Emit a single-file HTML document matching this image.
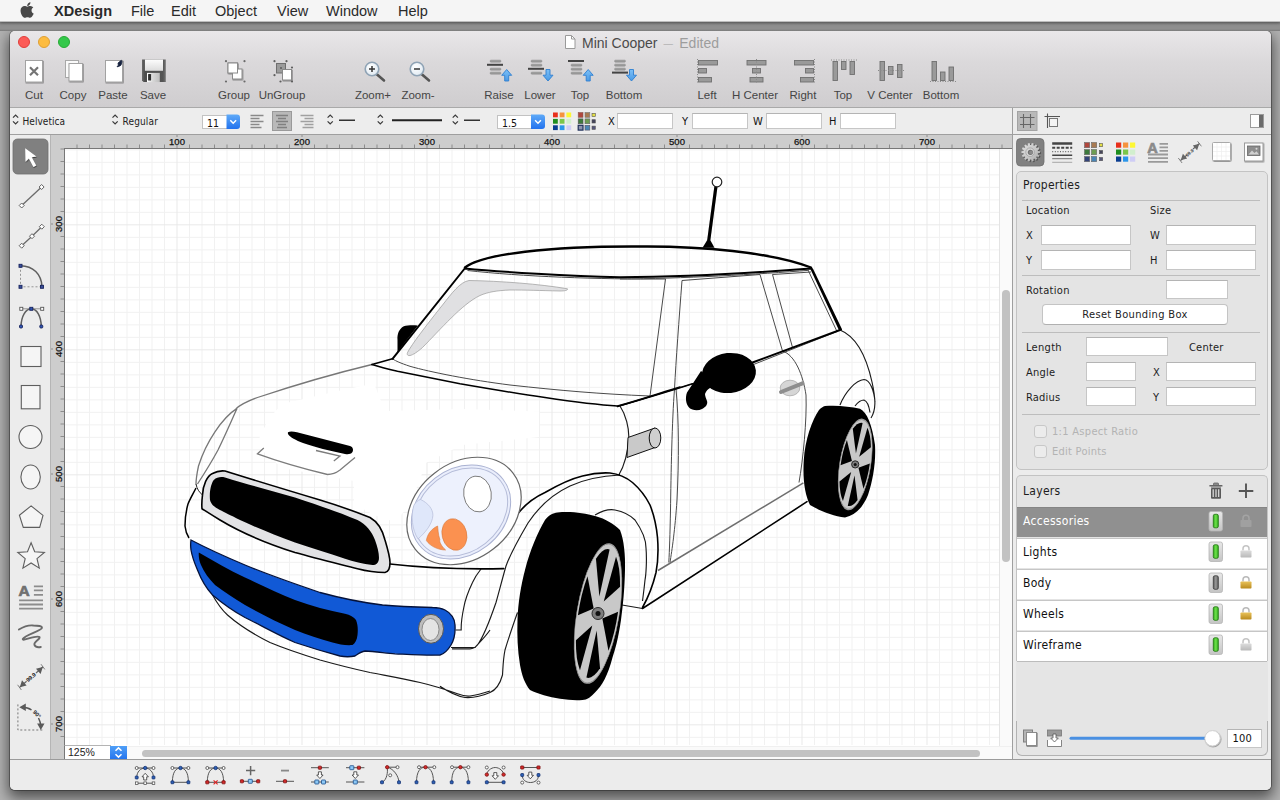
<!DOCTYPE html>
<html><head><meta charset="utf-8"><title>XDesign</title>
<style>
*{box-sizing:border-box;margin:0;padding:0}
html,body{width:1280px;height:800px;overflow:hidden}
body{background:#929292;font-family:"Liberation Sans",sans-serif;position:relative;color:#222}
.abs{position:absolute}
#desk{position:absolute;left:0;top:0;width:1280px;height:800px;background:#b2b2b2}
#topstrip{z-index:2;position:absolute;left:0;top:22px;width:1280px;height:9px;background:linear-gradient(#7e7e7e 0,#8f8f8f 3px,#8f8f8f 7px,#7a7a7a 9px)}
#menubar{z-index:3;position:absolute;left:0;top:0;width:1280px;height:22px;background:#f5f5f5;border-bottom:1px solid #bdbdbd;box-shadow:0 1px 3px rgba(0,0,0,.35)}
#menubar span{position:absolute;top:2px;font-size:14.5px;line-height:18px;color:#2a2a2a;white-space:nowrap}
#win{position:absolute;left:10px;top:31px;width:1261px;height:759px;border-radius:5px;background:#ececec;box-shadow:0 0 0 1px rgba(0,0,0,.3),0 6px 14px 2px rgba(0,0,0,.55);overflow:hidden}
#tbar{position:absolute;left:0;top:0;width:1261px;height:77px;background:linear-gradient(#e9e7e9 0,#dbd9db 40%,#cfcdcf 100%);border-bottom:1px solid #a9a9a9}
.tl{position:absolute;top:5px;width:12px;height:12px;border-radius:6px}
.lbl{position:absolute;top:57px;font-size:11.5px;line-height:14px;color:#454545;text-align:center;width:70px;margin-left:-35px;white-space:nowrap}
#title{position:absolute;top:3.500px;left:572px;font-size:14px;line-height:17px;color:#4a4a4a;white-space:nowrap}
#title i{font-style:normal;color:#9d9d9d}
#fbar{position:absolute;left:0;top:77px;width:1002px;height:27px;background:#ededed;border-bottom:1px solid #9f9f9f}
.lg{font-family:"DejaVu Sans","Liberation Sans",sans-serif;font-stretch:condensed}
.fld{position:absolute;background:#fff;border:1px solid #c6c6c6;border-top-color:#b4b4b4}
#palette{position:absolute;left:0;top:104px;width:41px;height:624px;background:#ececec;border-right:1px solid #b5b5b5}
#hruler{position:absolute;left:41px;top:104px;width:962px;height:15px;background:#cdcdcd}
#vruler{position:absolute;left:41px;top:104px;width:14px;height:624px;background:#cdcdcd}
#canvas{position:absolute;left:54px;top:117px;width:935px;height:598px;background:#fff;border-left:1px solid #777;border-top:1px solid #777;overflow:hidden}
#vscroll{position:absolute;left:989px;top:118px;width:13px;height:597px;background:#fafafa;border-left:1px solid #e4e4e4}
#hscroll{position:absolute;left:54px;top:715px;width:949px;height:13px;background:#fafafa;border-top:1px solid #f0f0f0}
#bbar{position:absolute;left:0;top:728px;width:1261px;height:31px;background:#ececec;border-top:1px solid #9b9b9b}
#side{position:absolute;left:1002px;top:77px;width:259px;height:651px;background:#ececec;border-left:1px solid #9f9f9f}
.box{position:absolute;background:#e4e4e4;border:1px solid #c3c3c3;border-radius:5px}
.sl{position:absolute;font-size:11.5px;line-height:14px;color:#1d1d1d;white-space:nowrap}
.hr{position:absolute;left:5px;width:238px;height:1px;background:#bdbdbd}
.row{position:absolute;left:0;width:250px;height:30px;background:#fff;border-top:1px solid #c9c9c9}
.row span{position:absolute;left:6px;top:7px;font-size:12.5px;line-height:15px;color:#111}
</style></head>
<body>
<div id="desk"></div>
<div id="topstrip"></div>
<div id="menubar">
<svg class="abs" style="left:0;top:0" width="40" height="22" viewBox="0 0 40 22"><path transform="translate(20.400 1.100) scale(0.0350 0.0347)" fill="#484848" d="M318.700 268.700c-.2-36.700 16.400-64.400 50-84.800-18.800-26.900-47.200-41.700-84.700-44.600-35.500-2.800-74.300 20.700-88.500 20.700-15 0-49.400-19.700-76.400-19.700C63.300 141.200 4 184.800 4 273.500q0 39.300 14.400 81.200c12.800 36.700 59 126.700 107.200 125.200 25.200-.6 43-17.900 75.800-17.900 31.800 0 48.300 17.900 76.400 17.900 48.600-.7 90.400-82.500 102.600-119.300-65.200-30.700-61.700-90-61.700-91.900zm-56.600-164.200c27.300-32.400 24.800-61.900 24-72.500-24.100 1.400-52 16.400-67.900 34.900-17.500 19.800-27.800 44.300-25.600 71.900 26.100 2 49.900-11.400 69.500-34.300z"/></svg>
<span style="left:54px;font-weight:bold">XDesign</span>
<span style="left:131px">File</span>
<span style="left:171px">Edit</span>
<span style="left:215px">Object</span>
<span style="left:277px">View</span>
<span style="left:326px">Window</span>
<span style="left:398px">Help</span>
</div>

<div id="win">
<div id="tbar">
 <div class="tl" style="left:8px;background:#fc5b57;border:1px solid #df3e3a"></div>
 <div class="tl" style="left:28px;background:#fdbc40;border:1px solid #de9f34"></div>
 <div class="tl" style="left:48px;background:#34c84a;border:1px solid #27aa35"></div>
 <div id="title">Mini Cooper <i><b style="font-weight:normal;font-size:9.500px;margin:0 2.500px 0 2px;position:relative;top:-1px">—</b> Edited</i></div>
 <svg class="abs" style="left:0;top:0" width="1261" height="77" viewBox="10 31 1261 77">
<defs>
<linearGradient id="gbar" x1="0" y1="0" x2="0" y2="1"><stop offset="0" stop-color="#a9a9a9"/><stop offset="1" stop-color="#8f8f8f"/></linearGradient>
<linearGradient id="garr" x1="0" y1="0" x2="0" y2="1"><stop offset="0" stop-color="#7cc0f7"/><stop offset="1" stop-color="#4a9ae6"/></linearGradient>
<radialGradient id="glens" cx=".4" cy=".35" r=".7"><stop offset="0" stop-color="#ffffff"/><stop offset="1" stop-color="#dfe9f2"/></radialGradient>
<filter id="sh" x="-20%" y="-20%" width="150%" height="150%"><feDropShadow dx="0.6" dy="0.8" stdDeviation="0.6" flood-color="#000" flood-opacity=".45"/></filter>
</defs>
<!-- doc icon in title -->
<path d="M565.500 35.500h6l3.500 3.500v9.500h-9.500z" fill="#fff" stroke="#9a9a9a"/><path d="M571.500 35.500v3.500h3.500" fill="none" stroke="#9a9a9a"/>
<!-- Cut -->
<rect x="25.500" y="60.500" width="17" height="21.500" fill="#fff" stroke="#a2a2a2" filter="url(#sh)"/>
<path d="M30 67.200l8 8M38 67.200l-8 8" stroke="#757575" stroke-width="2.200" fill="none"/>
<!-- Copy -->
<rect x="65.500" y="60.500" width="13" height="17" fill="#fafafa" stroke="#a8a8a8"/>
<rect x="69" y="63.500" width="13.500" height="17.500" fill="#fff" stroke="#a2a2a2" filter="url(#sh)"/>
<!-- Paste -->
<rect x="105.500" y="60.500" width="17" height="21.500" fill="#fff" stroke="#a2a2a2" filter="url(#sh)"/>
<path d="M121.300 60.300l-3.300 2.700 0.300 2.200-1.300 1.600 1.800-0.400 2.200-1.200 1-3.400z" fill="#16223f" stroke="#16223f" stroke-width=".8" stroke-linejoin="round"/>
<!-- Save -->
<linearGradient id="gflop" x1="0" y1="0" x2="1" y2="0"><stop offset="0" stop-color="#6a6a6a"/><stop offset=".12" stop-color="#4c4c4c"/><stop offset=".88" stop-color="#555"/><stop offset="1" stop-color="#747474"/></linearGradient>
<linearGradient id="glab" x1="0" y1="0" x2="0" y2="1"><stop offset="0" stop-color="#fdfdfd"/><stop offset="1" stop-color="#dcdcdc"/></linearGradient>
<linearGradient id="gshut" x1="0" y1="0" x2="1" y2="0"><stop offset="0" stop-color="#fff"/><stop offset=".45" stop-color="#d8d8d8"/><stop offset="1" stop-color="#bdbdbd"/></linearGradient>
<path d="M142 59.500h23.800v22.600h-22.300l-1.500-1.500z" fill="url(#gflop)"/>
<rect x="144.900" y="59.500" width="18.100" height="11.300" fill="url(#glab)"/>
<rect x="147" y="72.900" width="12.800" height="9.200" fill="url(#gshut)"/>
<rect x="148.100" y="74" width="3" height="6.600" rx=".6" fill="#2e2e2e"/>
<!-- Group -->
<g fill="#6a6a6a"><circle cx="226" cy="61.200" r="1.100"/><circle cx="244.500" cy="61.200" r="1.100"/><circle cx="226" cy="81.500" r="1.100"/><circle cx="244.500" cy="81.500" r="1.100"/></g>
<rect x="228" y="63" width="9.500" height="10" fill="#fff" stroke="#8a8a8a" filter="url(#sh)"/>
<rect x="232.500" y="69" width="9.500" height="10" fill="#fff" stroke="#8a8a8a" filter="url(#sh)"/>
<rect x="228" y="63" width="9.500" height="10" fill="#fff" stroke="#8a8a8a"/>
<!-- UnGroup -->
<rect x="276.500" y="63.500" width="9" height="9.500" fill="#9b9b9b" stroke="#6e6e6e"/>
<rect x="282.500" y="69.500" width="9" height="10.500" fill="#fff" stroke="#8a8a8a" filter="url(#sh)"/>
<g fill="#5f5f5f"><circle cx="274.500" cy="61.200" r="1.100"/><circle cx="286.500" cy="61.200" r="1.100"/><circle cx="274.500" cy="75.200" r="1.100"/><circle cx="281" cy="68" r="1.100"/><circle cx="292" cy="67.500" r="1.100"/><circle cx="280.500" cy="81.500" r="1.100"/><circle cx="292" cy="81.500" r="1.100"/></g>
<!-- Zoom+ -->
<g id="mag"><path d="M376.500 74l7.500 6.500" stroke="#555" stroke-width="2.600" stroke-linecap="round"/><circle cx="372" cy="69" r="6.800" fill="url(#glens)" stroke="#8fa3b5" stroke-width="1.600"/></g>
<path d="M369 69h6M372 66v6" stroke="#333" stroke-width="1.500"/>
<!-- Zoom- -->
<use href="#mag" x="45"/>
<path d="M414 69h6" stroke="#333" stroke-width="1.600"/>
<!-- Raise -->
<g id="bars3"><rect x="490" y="60" width="11" height="2.300" rx="1" fill="url(#gbar)" stroke="#8a8a8a" stroke-width=".4"/><rect x="490" y="68" width="11" height="2.300" rx="1" fill="url(#gbar)" stroke="#8a8a8a" stroke-width=".4"/><rect x="490" y="72" width="11" height="2.300" rx="1" fill="url(#gbar)" stroke="#8a8a8a" stroke-width=".4"/></g>
<rect x="487" y="63.800" width="16" height="2" fill="#444"/>
<path id="aup" d="M506.700 69.500l5 5.800h-3v5.700h-4v-5.700h-3z" fill="url(#garr)" stroke="#2f7fd0" stroke-width=".9"/>
<!-- Lower -->
<rect x="531" y="60" width="11" height="2.300" rx="1" fill="url(#gbar)" stroke="#8a8a8a" stroke-width=".4"/><rect x="531" y="64" width="11" height="2.300" rx="1" fill="url(#gbar)" stroke="#8a8a8a" stroke-width=".4"/><rect x="531" y="72" width="11" height="2.300" rx="1" fill="url(#gbar)" stroke="#8a8a8a" stroke-width=".4"/>
<rect x="528" y="67.800" width="16" height="2" fill="#444"/>
<path id="adn" d="M548 81l5-5.800h-3v-5.700h-4v5.700h-3z" fill="url(#garr)" stroke="#2f7fd0" stroke-width=".9"/>
<!-- Top -->
<rect x="571" y="64" width="11" height="2.300" rx="1" fill="url(#gbar)" stroke="#8a8a8a" stroke-width=".4"/><rect x="571" y="68" width="11" height="2.300" rx="1" fill="url(#gbar)" stroke="#8a8a8a" stroke-width=".4"/><rect x="571" y="72" width="11" height="2.300" rx="1" fill="url(#gbar)" stroke="#8a8a8a" stroke-width=".4"/>
<rect x="568" y="60" width="16" height="2" fill="#444"/>
<use href="#aup" x="81.500"/>
<!-- Bottom -->
<rect x="614.500" y="60" width="11" height="2.300" rx="1" fill="url(#gbar)" stroke="#8a8a8a" stroke-width=".4"/><rect x="614.500" y="64" width="11" height="2.300" rx="1" fill="url(#gbar)" stroke="#8a8a8a" stroke-width=".4"/><rect x="614.500" y="68" width="11" height="2.300" rx="1" fill="url(#gbar)" stroke="#8a8a8a" stroke-width=".4"/>
<rect x="612" y="71.600" width="16" height="2" fill="#444"/>
<use href="#adn" x="83.500"/>
<!-- Align icons -->
<g fill="#9a9a9a" stroke="#707070" stroke-width=".9">
<rect x="698.500" y="60.500" width="19" height="4.500"/><rect x="698.500" y="68.500" width="8" height="4.500"/><rect x="698.500" y="77.500" width="13" height="4.500"/>
<rect x="747" y="60.500" width="19" height="4.500"/><rect x="752.500" y="68.500" width="8" height="4.500"/><rect x="750" y="77.500" width="13" height="4.500"/>
<rect x="794.500" y="60.500" width="19" height="4.500"/><rect x="805.500" y="68.500" width="8" height="4.500"/><rect x="800.500" y="77.500" width="13" height="4.500"/>
<rect x="833" y="61.500" width="4.500" height="19"/><rect x="841.500" y="61.500" width="4.500" height="8"/><rect x="850" y="61.500" width="4.500" height="13"/>
<rect x="880" y="61.500" width="4.500" height="19"/><rect x="888.500" y="66.500" width="4.500" height="8"/><rect x="897.500" y="64.500" width="4.500" height="13"/>
<rect x="932" y="61.500" width="4.500" height="19"/><rect x="940.500" y="72" width="4.500" height="8.500"/><rect x="949" y="67" width="4.500" height="13.500"/>
</g>
<g stroke="#8a8a8a" stroke-width="1" stroke-dasharray="1 1.500" fill="none">
<path d="M697.500 59v24"/><path d="M756.500 59v24"/><path d="M814.500 59v24"/>
<path d="M831 60h26"/><path d="M878 70.500h26"/><path d="M930 81.500h26"/>
</g>
</svg>

 <div class="lbl" style="left:24px">Cut</div>
 <div class="lbl" style="left:63px">Copy</div>
 <div class="lbl" style="left:103px">Paste</div>
 <div class="lbl" style="left:143px">Save</div>
 <div class="lbl" style="left:224px">Group</div>
 <div class="lbl" style="left:272px">UnGroup</div>
 <div class="lbl" style="left:363px">Zoom+</div>
 <div class="lbl" style="left:408px">Zoom-</div>
 <div class="lbl" style="left:489px">Raise</div>
 <div class="lbl" style="left:530px">Lower</div>
 <div class="lbl" style="left:570px">Top</div>
 <div class="lbl" style="left:614px">Bottom</div>
 <div class="lbl" style="left:697px">Left</div>
 <div class="lbl" style="left:745px">H Center</div>
 <div class="lbl" style="left:793px">Right</div>
 <div class="lbl" style="left:833px">Top</div>
 <div class="lbl" style="left:880px">V Center</div>
 <div class="lbl" style="left:931px">Bottom</div>
</div>

<div id="fbar">
<svg class="abs" style="left:0;top:0" width="1003" height="27" viewBox="10 108 1003 27">
<defs>
<linearGradient id="gblue" x1="0" y1="0" x2="0" y2="1"><stop offset="0" stop-color="#5faaf8"/><stop offset="1" stop-color="#2272ee"/></linearGradient>
<g id="chev"><path d="M0 3.200l2.600-2.700 2.600 2.700M0 6.800l2.600 2.700 2.600-2.700" fill="none" stroke="#3a3a3a" stroke-width="1.200"/></g>
</defs>
<use href="#chev" x="13" y="114.500"/>
<use href="#chev" x="112.500" y="114.500"/>
<!-- size combo -->
<rect x="202.500" y="115.500" width="25" height="13" fill="#fff" stroke="#c2c2c2"/>
<path d="M226.500 114.500h10.500a3 3 0 0 1 3 3v8.500a3 3 0 0 1-3 3h-10.500z" fill="url(#gblue)"/>
<path d="M230.300 120.300l2.900 2.900 2.900-2.900" fill="none" stroke="#fff" stroke-width="1.500"/>
<!-- align left -->
<path d="M250.500 115.500h13M250.500 118.500h9M250.500 121.500h13M250.500 124.500h9M250.500 127.500h11" stroke="#8a8a8a" stroke-width="1.600"/>
<rect x="272.500" y="111.500" width="19" height="19" fill="#b9b9b9" stroke="#9a9a9a"/>
<path d="M276 115.500h12M278 118.500h8M276 121.500h12M278 124.500h8M277 127.500h10" stroke="#808080" stroke-width="1.600"/>
<path d="M300.500 115.500h13M304.500 118.500h9M300.500 121.500h13M304.500 124.500h9M302.500 127.500h11" stroke="#a0a0a0" stroke-width="1.600"/>
<use href="#chev" x="327.600" y="114.500"/>
<path d="M339 120.300h16" stroke="#333" stroke-width="1.600"/>
<use href="#chev" x="377.700" y="114.500"/>
<path d="M392 120.300h50" stroke="#222" stroke-width="2"/>
<use href="#chev" x="452.700" y="114.500"/>
<path d="M464 120.300h16" stroke="#333" stroke-width="1.600"/>
<!-- width combo -->
<rect x="497.500" y="115.500" width="34" height="13" fill="#fff" stroke="#c2c2c2"/>
<path d="M531 114.500h11a3 3 0 0 1 3 3v8.500a3 3 0 0 1-3 3h-11z" fill="url(#gblue)"/>
<path d="M535.100 120.300l2.900 2.900 2.900-2.900" fill="none" stroke="#fff" stroke-width="1.500"/>
<!-- colour grid 1 -->
<g id="cg1">
<rect x="553" y="112.500" width="4.800" height="4.800" fill="#e8301c"/><rect x="559.700" y="112.500" width="4.800" height="4.800" fill="#f5923e"/><rect x="566.400" y="112.500" width="4.800" height="4.800" fill="#fdf733"/>
<rect x="553" y="118.900" width="4.800" height="4.800" fill="#1f8d1f"/><rect x="559.700" y="118.900" width="4.800" height="4.800" fill="#7bc74a"/><rect x="566.400" y="118.900" width="4.800" height="4.800" fill="#d2efce"/>
<rect x="553" y="125.300" width="4.800" height="4.800" fill="#0a3d91"/><rect x="559.700" y="125.300" width="4.800" height="4.800" fill="#2b96ea"/><rect x="566.400" y="125.300" width="4.800" height="4.800" fill="#cfcdf6"/>
</g>
<g id="cg2">
<rect x="578.200" y="112.500" width="4.800" height="4.800" fill="#b0473d" stroke="#8a5a55" stroke-width=".6"/><rect x="585" y="112.500" width="4.800" height="4.800" fill="#a87a52" stroke="#777" stroke-width=".6"/><rect x="592" y="113.300" width="3.300" height="3.300" fill="#e4df45" stroke="#555" stroke-width=".6"/>
<rect x="578.200" y="118.900" width="4.800" height="4.800" fill="#3d7a3d" stroke="#555" stroke-width=".6"/><rect x="585" y="118.900" width="4.800" height="4.800" fill="#6e9d52" stroke="#666" stroke-width=".6"/><rect x="592" y="119.700" width="3.300" height="3.300" fill="#44445a" stroke="#555" stroke-width=".6"/>
<rect x="578.200" y="125.300" width="4.800" height="4.800" fill="#8c93ad" stroke="#1f2f5a" stroke-width="1.200"/><rect x="585" y="125.300" width="4.800" height="4.800" fill="#4a86b5" stroke="#556" stroke-width=".6"/><rect x="592" y="126.100" width="3.300" height="3.300" fill="#55557a" stroke="#555" stroke-width=".6"/>
</g>
</svg>
<div class="lg abs" style="left:12.500px;top:7px;font-size:10px;line-height:14px;color:#222;letter-spacing:.05px">Helvetica</div>
<div class="lg abs" style="left:112.500px;top:7px;font-size:10px;line-height:14px;color:#222;letter-spacing:.15px">Regular</div>
<div class="lg abs" style="left:197px;top:7.500px;font-size:10.500px;line-height:14px;color:#111">11</div>
<div class="lg abs" style="left:492px;top:7.500px;font-size:10.500px;line-height:14px;color:#111">1.5</div>
<div class="lg abs" style="left:598px;top:7px;font-size:11px;line-height:14px;color:#111">X</div>
<div class="fld" style="left:607px;top:5px;width:56px;height:16px"></div>
<div class="lg abs" style="left:672px;top:7px;font-size:11px;line-height:14px;color:#111">Y</div>
<div class="fld" style="left:682px;top:5px;width:56px;height:16px"></div>
<div class="lg abs" style="left:743px;top:7px;font-size:11px;line-height:14px;color:#111">W</div>
<div class="fld" style="left:756px;top:5px;width:56px;height:16px"></div>
<div class="lg abs" style="left:819px;top:7px;font-size:11px;line-height:14px;color:#111">H</div>
<div class="fld" style="left:830px;top:5px;width:56px;height:16px"></div>

</div>

<div id="palette">
<svg class="abs" style="left:0;top:0" width="41" height="624" viewBox="10 135 41 624">
<defs><filter id="sh2" x="-30%" y="-30%" width="170%" height="170%"><feDropShadow dx="0.500" dy="1" stdDeviation="0.700" flood-color="#000" flood-opacity=".55"/></filter></defs>
<rect x="13" y="139" width="35" height="35" rx="4.500" fill="#808080" stroke="#6e6e6e" stroke-width=".8"/>
<path d="M25.200 148.300l0.300 13.400 3.400-3.100 4.500 8.300 2.800-1.500-4.500-8.200 4.700-0.700z" fill="#fff" filter="url(#sh2)"/>
<!-- line -->
<g stroke="#6b6b6b" stroke-width="1.300" fill="none"><path d="M21.700 205.500L41.600 187"/><path d="M21.700 245.700L32 236.200 41.800 226.700"/></g>
<g fill="#fff" stroke="#555" stroke-width=".9">
<path d="M21.700 203l2.500 2.500-2.500 2.500-2.500-2.500zM41.600 184.500l2.500 2.500-2.500 2.500-2.500-2.500z"/>
<path d="M21.700 243.200l2.500 2.500-2.500 2.500-2.500-2.500zM32 233.700l2.500 2.500-2.500 2.500-2.500-2.500zM41.800 224.200l2.500 2.500-2.500 2.500-2.500-2.500z"/></g>
<!-- arc -->
<path d="M20.500 265.800V286.800H42" stroke="#8a8a8a" stroke-width=".9" stroke-dasharray="2 2" fill="none"/>
<path d="M20.500 265.800C33 266 41.500 274 42 286.800" stroke="#5f5f5f" stroke-width="1.500" fill="none"/>
<g fill="#3a4f9c" stroke="#18245e" stroke-width=".9"><rect x="19" y="264.300" width="3" height="3"/><rect x="19" y="285.300" width="3" height="3"/><rect x="40.500" y="285.300" width="3" height="3"/></g>
<!-- bezier -->
<path d="M21.300 308.800H42.200" stroke="#8a8a8a" stroke-width=".9" fill="none"/>
<path d="M21 326.500C21.300 316 25.500 309 31.300 308.800C37 309 41 316 41.300 326.500" stroke="#5f5f5f" stroke-width="1.500" fill="none"/>
<g fill="#fff" stroke="#555" stroke-width=".9"><rect x="19.800" y="307.300" width="3" height="3"/><rect x="40.700" y="307.300" width="3" height="3"/></g>
<g fill="#2f55b4" stroke="#18245e" stroke-width=".9"><rect x="29.800" y="307.300" width="3" height="3"/><rect x="19.500" y="325" width="3" height="3" rx="1"/><rect x="39.800" y="325" width="3" height="3" rx="1"/></g>
<!-- shapes -->
<g fill="#f5f5f5" stroke="#5e5e5e" stroke-width="1.100">
<rect x="21" y="346.500" width="20" height="20"/>
<rect x="21.300" y="385.500" width="18.700" height="23.300"/>
<circle cx="30.500" cy="437" r="11.500"/>
<ellipse cx="30.600" cy="477" rx="9.700" ry="12"/>
<path d="M31.100 505.900L43 515.400 39.700 527.400H23.300L19.400 515.200z"/>
<path d="M31.1 542.8L34.7 551.8L44.4 552.5L37.0 558.7L39.3 568.1L31.1 563.0L22.9 568.1L25.2 558.7L17.8 552.5L27.5 551.8z"/>
</g>
<!-- text tool -->
<path d="M33.900 586.300h9.100M33.900 590.400h9.100M33.900 594.900h9.100M19.100 600.400h23.900M19.100 604.500h23.900M19.100 608.700h23.900" stroke="#8c8c8c" stroke-width="1.800"/>
<text x="18.600" y="596.300" font-size="15.500" font-weight="bold" fill="#707070" stroke="#707070" stroke-width=".7" font-family="Liberation Sans, sans-serif">A</text>
<!-- scribble -->
<path d="M18.900 629.500C23 627 29 625 33.400 625.500C38 625.500 42.500 626 41.900 628C41 631 25 635 22.800 639C22 642 36 634.500 39.500 637C41 639 33 642 34.500 645C35.500 647 38.500 647.500 40.800 647" stroke="#6a6a6a" stroke-width="1.900" fill="none" stroke-linecap="round"/>
<!-- dimension -->
<g stroke="#666" stroke-width="1.200" fill="none"><path d="M19.600 687.400l7-6.200M36 673l7-6.200"/><path d="M17.600 684.800l3.800 5.200M41 664.200l3.800 5.200" stroke-width=".8"/></g>
<path d="M19.800 687.200l2.200-7 4.600 5.200zM42.800 667l-2.200 7-4.600-5.200z" fill="#5a5a5a"/>
<text transform="translate(32.300 678.800) rotate(-41)" font-size="5.600" font-weight="bold" text-anchor="middle" fill="#222" font-family="Liberation Sans, sans-serif">99.9</text>
<!-- angle -->
<path d="M17.900 704.400V730H43" stroke="#777" stroke-width="1" stroke-dasharray="2 2" fill="none"/>
<path d="M22 707.300C26 707.300 29.500 708.500 31.500 710M38.500 718C40 721 40.800 724 40.800 726" stroke="#555" stroke-width="1.500" fill="none"/>
<path d="M19.300 707.300l6.500-3.800v7.400zM40.800 730l-3.700-6.500h7.400z" fill="#5a5a5a"/>
<text transform="translate(35.500 715.500) rotate(45)" font-size="5.600" font-weight="bold" text-anchor="middle" fill="#222" font-family="Liberation Sans, sans-serif">90°</text>
</svg>

</div>
<div id="hruler"><svg class="abs" style="left:0;top:0" width="962" height="15" viewBox="0 0 962 15"><path d="M26.0 9.5V14M38.5 9.5V14M51.0 9.5V14M63.5 9.5V14M76.0 9.5V14M88.5 9.5V14M101.0 9.5V14M113.5 9.5V14M126.0 0V14M138.5 9.5V14M151.0 9.5V14M163.5 9.5V14M176.0 9.5V14M188.5 9.5V14M201.0 9.5V14M213.5 9.5V14M226.0 9.5V14M238.5 9.5V14M251.0 0V14M263.5 9.5V14M276.0 9.5V14M288.5 9.5V14M301.0 9.5V14M313.5 9.5V14M326.0 9.5V14M338.5 9.5V14M351.0 9.5V14M363.5 9.5V14M376.0 0V14M388.5 9.5V14M401.0 9.5V14M413.5 9.5V14M426.0 9.5V14M438.5 9.5V14M451.0 9.5V14M463.5 9.5V14M476.0 9.5V14M488.5 9.5V14M501.0 0V14M513.5 9.5V14M526.0 9.5V14M538.5 9.5V14M551.0 9.5V14M563.5 9.5V14M576.0 9.5V14M588.5 9.5V14M601.0 9.5V14M613.5 9.5V14M626.0 0V14M638.5 9.5V14M651.0 9.5V14M663.5 9.5V14M676.0 9.5V14M688.5 9.5V14M701.0 9.5V14M713.5 9.5V14M726.0 9.5V14M738.5 9.5V14M751.0 0V14M763.5 9.5V14M776.0 9.5V14M788.5 9.5V14M801.0 9.5V14M813.5 9.5V14M826.0 9.5V14M838.5 9.5V14M851.0 9.5V14M863.5 9.5V14M876.0 0V14M888.5 9.5V14M901.0 9.5V14M913.5 9.5V14M926.0 9.5V14M938.5 9.5V14M951.0 9.5V14" stroke="#8d8d8d" stroke-width="1" fill="none"/><path d="M13 13.500H962" stroke="#777" stroke-width="1" fill="none"/><rect x="117.0" y="2" width="18" height="8" fill="#cdcdcd"/><text x="126.0" y="10" font-size="9.500" text-anchor="middle" fill="#111" stroke="#111" stroke-width=".25" font-family="Liberation Sans, sans-serif">100</text><rect x="242.0" y="2" width="18" height="8" fill="#cdcdcd"/><text x="251.0" y="10" font-size="9.500" text-anchor="middle" fill="#111" stroke="#111" stroke-width=".25" font-family="Liberation Sans, sans-serif">200</text><rect x="367.0" y="2" width="18" height="8" fill="#cdcdcd"/><text x="376.0" y="10" font-size="9.500" text-anchor="middle" fill="#111" stroke="#111" stroke-width=".25" font-family="Liberation Sans, sans-serif">300</text><rect x="492.0" y="2" width="18" height="8" fill="#cdcdcd"/><text x="501.0" y="10" font-size="9.500" text-anchor="middle" fill="#111" stroke="#111" stroke-width=".25" font-family="Liberation Sans, sans-serif">400</text><rect x="617.0" y="2" width="18" height="8" fill="#cdcdcd"/><text x="626.0" y="10" font-size="9.500" text-anchor="middle" fill="#111" stroke="#111" stroke-width=".25" font-family="Liberation Sans, sans-serif">500</text><rect x="742.0" y="2" width="18" height="8" fill="#cdcdcd"/><text x="751.0" y="10" font-size="9.500" text-anchor="middle" fill="#111" stroke="#111" stroke-width=".25" font-family="Liberation Sans, sans-serif">600</text><rect x="867.0" y="2" width="18" height="8" fill="#cdcdcd"/><text x="876.0" y="10" font-size="9.500" text-anchor="middle" fill="#111" stroke="#111" stroke-width=".25" font-family="Liberation Sans, sans-serif">700</text></svg></div>
<div id="vruler"><svg class="abs" style="left:0;top:0" width="14" height="624" viewBox="0 0 14 624"><path d="M9.5 14.0H14M9.5 26.5H14M9.5 39.0H14M9.5 51.5H14M9.5 64.0H14M9.5 76.5H14M0 89.0H14M9.5 101.5H14M9.5 114.0H14M9.5 126.5H14M9.5 139.0H14M9.5 151.5H14M9.5 164.0H14M9.5 176.5H14M9.5 189.0H14M9.5 201.5H14M0 214.0H14M9.5 226.5H14M9.5 239.0H14M9.5 251.5H14M9.5 264.0H14M9.5 276.5H14M9.5 289.0H14M9.5 301.5H14M9.5 314.0H14M9.5 326.5H14M0 339.0H14M9.5 351.5H14M9.5 364.0H14M9.5 376.5H14M9.5 389.0H14M9.5 401.5H14M9.5 414.0H14M9.5 426.5H14M9.5 439.0H14M9.5 451.5H14M0 464.0H14M9.5 476.5H14M9.5 489.0H14M9.5 501.5H14M9.5 514.0H14M9.5 526.5H14M9.5 539.0H14M9.5 551.5H14M9.5 564.0H14M9.5 576.5H14M0 589.0H14M9.5 601.5H14" stroke="#8d8d8d" stroke-width="1" fill="none"/><rect x="2" y="80.0" width="8" height="18" fill="#cdcdcd"/><text transform="translate(10.5 89.0) rotate(-90)" font-size="9.500" text-anchor="middle" fill="#111" stroke="#111" stroke-width=".25" font-family="Liberation Sans, sans-serif">300</text><rect x="2" y="205.0" width="8" height="18" fill="#cdcdcd"/><text transform="translate(10.5 214.0) rotate(-90)" font-size="9.500" text-anchor="middle" fill="#111" stroke="#111" stroke-width=".25" font-family="Liberation Sans, sans-serif">400</text><rect x="2" y="330.0" width="8" height="18" fill="#cdcdcd"/><text transform="translate(10.5 339.0) rotate(-90)" font-size="9.500" text-anchor="middle" fill="#111" stroke="#111" stroke-width=".25" font-family="Liberation Sans, sans-serif">500</text><rect x="2" y="455.0" width="8" height="18" fill="#cdcdcd"/><text transform="translate(10.5 464.0) rotate(-90)" font-size="9.500" text-anchor="middle" fill="#111" stroke="#111" stroke-width=".25" font-family="Liberation Sans, sans-serif">600</text><rect x="2" y="580.0" width="8" height="18" fill="#cdcdcd"/><text transform="translate(10.5 589.0) rotate(-90)" font-size="9.500" text-anchor="middle" fill="#111" stroke="#111" stroke-width=".25" font-family="Liberation Sans, sans-serif">700</text></svg></div>
<div id="canvas">
<svg class="abs" style="left:0;top:0" width="935" height="596" viewBox="0 0 935 596"><path d="M12.00 0V596M24.50 0V596M37.00 0V596M49.50 0V596M62.00 0V596M74.50 0V596M87.00 0V596M99.50 0V596M124.50 0V596M137.00 0V596M149.50 0V596M162.00 0V596M174.50 0V596M187.00 0V596M199.50 0V596M212.00 0V596M224.50 0V596M249.50 0V596M262.00 0V596M274.50 0V596M287.00 0V596M299.50 0V596M312.00 0V596M324.50 0V596M337.00 0V596M349.50 0V596M374.50 0V596M387.00 0V596M399.50 0V596M412.00 0V596M424.50 0V596M437.00 0V596M449.50 0V596M462.00 0V596M474.50 0V596M499.50 0V596M512.00 0V596M524.50 0V596M537.00 0V596M549.50 0V596M562.00 0V596M574.50 0V596M587.00 0V596M599.50 0V596M624.50 0V596M637.00 0V596M649.50 0V596M662.00 0V596M674.50 0V596M687.00 0V596M699.50 0V596M712.00 0V596M724.50 0V596M749.50 0V596M762.00 0V596M774.50 0V596M787.00 0V596M799.50 0V596M812.00 0V596M824.50 0V596M837.00 0V596M849.50 0V596M874.50 0V596M887.00 0V596M899.50 0V596M912.00 0V596M924.50 0V596M0 0.85H935M0 13.35H935M0 25.85H935M0 38.35H935M0 50.85H935M0 63.35H935M0 88.35H935M0 100.85H935M0 113.35H935M0 125.85H935M0 138.35H935M0 150.85H935M0 163.35H935M0 175.85H935M0 188.35H935M0 213.35H935M0 225.85H935M0 238.35H935M0 250.85H935M0 263.35H935M0 275.85H935M0 288.35H935M0 300.85H935M0 313.35H935M0 338.35H935M0 350.85H935M0 363.35H935M0 375.85H935M0 388.35H935M0 400.85H935M0 413.35H935M0 425.85H935M0 438.35H935M0 463.35H935M0 475.85H935M0 488.35H935M0 500.85H935M0 513.35H935M0 525.85H935M0 538.35H935M0 550.85H935M0 563.35H935M0 588.35H935" stroke="#f1f1f1" stroke-width="1" fill="none"/><path d="M112.00 0V596M237.00 0V596M362.00 0V596M487.00 0V596M612.00 0V596M737.00 0V596M862.00 0V596M0 75.85H935M0 200.85H935M0 325.85H935M0 450.85H935M0 575.85H935" stroke="#e9e9e9" stroke-width="1" fill="none"/></svg><svg class="abs" style="left:0;top:0" width="935" height="596" viewBox="65 149 935 596">
<path d="M282 404L338 391 374 383.500 385 411 462 409 539 411.500 539 437 462 445 426 463 410.500 504 395 522 374 515 354 504 354 481 282 468 256 445 268.500 419z" fill="#fff"/>
<path d="M372 364.500C345 371 295 385 257.500 397.500C248 401 240 405 236 408.800M237 408.400C222 418 206 442 198.500 466C197 473 196 479 196 484.500M237 408.400C231 422 224 438 218 450C211 463 204 474 197.500 484" fill="none" stroke="#777" stroke-width="1.300"/>
<path d="M665.500 279L650 396C600 394 560 390.500 510 385C470 380 430 372 410 366.300C400 363 396 361 393 359.200M467.500 270.500C520 276.500 600 279.500 665.500 279M674.500 389C676 360 679 320 682 280.500L760 274.500L782.500 351M792.500 347.500L772.500 274.500L811 272M620 279C680 278.700 760 274.200 809 270.300M674.500 389C672 420 671 475 670.500 510C670 535 669.500 550 668.800 562.500M676 389C679 420 679 460 677 500C675 530 672 550 670 562.500M782.500 351C795 355 803 375 806 395C807 420 803 460 799 482.500M752.500 362.500L692.500 383.800L620 406M808.500 271L837 331.500L753.500 364.500" fill="none" stroke="#4a4a4a" stroke-width="1"/>
<path d="M658 570.500L803.400 482.800" fill="none" stroke="#6e6e6e" stroke-width="1.500"/>
<path d="M840 330C855 336 866 355 872 382C876 400 876 410 871 418M840 405C845 392 856 380 864 379.500C870 380 874 390 875 402M855 406C858 402 861 400 864 400C867 401 869 406 870 412.500M620 406C626 415 629 428 628.800 437.500C628 450 626 463 618.800 475M620 475C600 476 585 479 570 486C555 493 540 505 528 523C518 540 510 555 506 566C502 580 499 592 496 602.500C490 620 484 636 477.500 645C475 648 472 648.800 470 648.800L452 648.800M595 515C602 511 610 509 615 510C625 512 631 516 635 520C642 530 646 540 646 548C647 560 646 575 645 580C644 590 643 597 642.500 601M481 569C477 574 474.500 578 472.500 582.500C468 592 465 600 463.800 607.500C462 616 461 624 461.200 630L455.500 630M517.500 612.500C512 628 508 640 505 650C503 660 503 668 502.500 675C500 684 496 690 490 692.500C482 696 472 698 465 697.500C455 696 447 691 440 686.300M212.500 595C217 603 222 610 227.500 615C240 626 255 635 270 642.500C288 650 304 655 320 660C338 665 354 669 370 672.500C388 676 405 679 420 682.500C435 686 447 690 457.500 693.800C462 695.500 466 696.500 470 696C478 695 484 693 490 691M451 647.500L475 647.500C480 642 486 636 490 630M622 605L642.500 608.500" fill="none" stroke="#1a1a1a" stroke-width="1.150"/>
<path d="M465 267.500C482 254 550 246 640 246.500C700 246 770 252 811 267.500" fill="none" stroke="#000" stroke-width="2.400" stroke-linecap="round"/>
<path d="M465 268.500C500 272 570 276 620 277.300C680 277 760 272.500 811 268.500M465.500 267.500L392.500 358.800M811 268L840 330M812 269L841 329.500M840 330L752.500 362.500" fill="none" stroke="#000" stroke-width="2" stroke-linecap="round"/>
<path d="M372 364.500C380 367 390 369.500 397.500 371.300C420 376 440 380 460 383.800C490 389 520 394 545 397.500C575 402 600 405 617.500 406C640 400 660 393 680 387" fill="none" stroke="#000" stroke-width="1.500" stroke-linecap="round"/>
<path d="M372 364.500L392.500 358.800M617.500 406.500C640 400 670 391 692.500 383.800M642.500 608.500L807 501.700M515 517.500C523 506 533 498 545 492.500C558 485 570 479 582.500 476C592 473.500 601 472.500 610 473C619 474 627 478 632.500 482.500C640 489 646 497 650 505C654 515 656.500 527 657.500 537.500C658.500 550 658 562 656 572.500C653 585 649 596 642.500 607.500M390 564C420 567.500 460 569.500 503.800 568.600" fill="none" stroke="#000" stroke-width="1.600" stroke-linecap="round"/>
<path d="M469 280.500C500 281 540 284 567.500 288.800C568 290 566 291 560 291C540 290.500 525 290 510 290C497 290.500 488 292 480 295.500C462 304 440 330 422.500 347.500C418 351.500 413 355 410 355.500C407 356 407 354 407.500 352.500C412 344 425 327 442.500 305C452 293 460 282 469 280.500z" fill="#e0e0e2" stroke="#999" stroke-width=".7"/>
<path d="M417.500 325.600C412 325 407 325.500 403.800 326.300C399 329 397 334 397.500 340C397.500 345 397.500 349 397.500 352L417.500 326z" fill="#000"/>
<path d="M716 186L708.800 240" stroke="#000" stroke-width="3.200" fill="none"/><path d="M702.500 247.800L708.800 237.500L714.500 247.800z" fill="#000"/><circle cx="717" cy="182" r="4.800" fill="#fff" stroke="#222" stroke-width="1.200"/>
<ellipse cx="729" cy="373" rx="27" ry="20" transform="rotate(-6 729 373)" fill="#000"/>
<path d="M701 371L687 392.500C685 398 686 404 689 407.500C692 410.500 698 411 702 409C706 407 708 404 707 401C706 398 705 396 705 394C706 391 708 389 710 388L722 388z" fill="#000"/>
<ellipse cx="790" cy="388" rx="9.800" ry="7.800" fill="#d6d6d6" stroke="#a8a8a8" stroke-width=".8"/><path d="M781 392L802.500 383.300" stroke="#8e8e8e" stroke-width="4" fill="none" stroke-linecap="round"/>
<path d="M628 437.500L655 428L655 447.500L627 457.500z" fill="#c9c9c9" stroke="#111" stroke-width="1"/><ellipse cx="655" cy="438" rx="5.800" ry="10" fill="#cfcfcf" stroke="#111" stroke-width="1"/>
<path d="M202.500 495C203 485 207 476 212.500 473.500C217 471 221 470.500 225 471C260 482 290 491 320 500C340 506 355 511.500 370 517.500C378 522 383 532 385 540C388 550 390 557 390 562.500C390 569 388 572 385 572.500C375 572.500 366 571 357.500 568.800C335 563 315 558 295 552.500C265 543 240 532 220 520C210 514 204 510 202 508.800C201.500 504 202 499 202.500 495z" fill="#e3e3e5" stroke="#000" stroke-width="1.600"/>
<path d="M210 500C209 490 212 482 213.800 480C217 477 221 476.500 225 477.500C250 485 272 491 295 497.500C318 505 338 512 357.500 520C366 524 372 532 375 540C378 548 379.500 555 378.800 560C378 564 375 565.500 372.500 565C363 564 353 561.500 345 558.800C328 553 311 548 295 542.500C275 535 257 528 240 520C230 515 224 512 220 510C214 507 211 504 210 500z" fill="#000"/>
<path d="M196 488C193 494 190 499 188 504C186 511 185 519 185 526C185.500 531 187 535 189 538" fill="none" stroke="#000" stroke-width="1.500"/>
<path d="M196 484C197 489 199 492 202.500 495" fill="none" stroke="#222" stroke-width="1"/>
<path d="M191 540C208 549 226 557 245 565C270 575.500 295 584 320 592.500C342 598.500 362 602.500 382.500 605C400 606.500 416 607 432.500 607.500C438 607.500 442 608.500 445 610C451 613 455 619 455 625C455.500 633 454 640 451 645C448 650 444 654 440 655C425 655.500 410 654.500 395 653.800C385 653 375 651.500 365 651C361 651.500 358 654 355 656C350 657 345 657 340 656C325 652 310 647.500 295 642.500C278 635 262 626 245 617.500C233 611 222 603 212.500 595C206 588 201 579 197.500 570C194 562 192 556 191 550C190.500 546 190.500 543 191 540z" fill="#1159d6" stroke="#05123a" stroke-width="1.300"/>
<path d="M198.800 552.500C214 561 229 570 245 577.500C262 585.500 278 593 295 600C312 606 328 610.500 345 613.800C350 615 354 617 356 620C358 625 358 630 357.500 635C357 640 355 643.500 352.500 645C346 645.500 339 644.500 332.500 642.500C320 639 307 635 295 630C278 622.500 261 614 245 605C234 598 224 592 215 585C209 579 204 572 201 565C199 560 198.500 556 198.800 552.500z" fill="#000"/>
<ellipse cx="431" cy="628.800" rx="12.500" ry="14.500" fill="#bdbdbd" stroke="#555" stroke-width="1"/><ellipse cx="430.500" cy="629.500" rx="8.500" ry="11" fill="#e4e4e4" stroke="#777" stroke-width=".8"/>
<g transform="translate(464 511) rotate(-38)"><ellipse rx="62" ry="48" fill="#fff" stroke="#666" stroke-width="1.200"/></g>
<g transform="translate(461 512) rotate(-38)"><ellipse rx="53.300" ry="42.700" fill="#eaeefc" stroke="#aab2d2" stroke-width="1"/><ellipse rx="50.300" ry="39.700" fill="#edf1fd" stroke="#b5bcd8" stroke-width="1"/></g>
<path d="M420.600 499.500C428 503 433 509 432.900 515.300C432.500 524 425 533 418 538.900C412 530 410.500 515 414 505C416 502 418 500 420.600 499.500z" fill="#dfe7fa" stroke="#b5bcd8" stroke-width=".7"/>
<ellipse cx="477.500" cy="494" rx="13.800" ry="18" transform="rotate(-8 477.500 494)" fill="#fff" stroke="#777" stroke-width=".9"/>
<ellipse cx="454.400" cy="534.500" rx="12.300" ry="16" transform="rotate(-14 454.400 534.500)" fill="#fb9150" stroke="#d97a3c" stroke-width=".6"/>
<path d="M437.600 526C431 529 427 535 426.400 540.600C430 546 438 550 445.600 550C441 546 439 541 439.900 539.800C438 534 438 529 437.600 526z" fill="#fb9150" stroke="#d97a3c" stroke-width=".6"/>
<path d="M288 432.300C290 431 293 431.300 297 432.300L350 446C353 447 353.800 450 352.300 452.300C350.800 454.300 348 454.500 345 454C330 451 315 447.300 303 443C296 440.500 290 437 288.300 434.500C287.800 433.500 287.800 432.800 288 432.300z" fill="#000"/>
<path d="M263.800 448L257.500 453.800C280 462 305 469 327.500 474.500C332 474.500 336 473 340 470L355 457.500" fill="none" stroke="#7c7c7c" stroke-width="1.300"/>
<path d="M316 450.500L340 456L333.800 461" fill="none" stroke="#7c7c7c" stroke-width="1.300"/>
<path d="M557.500 512.500C570 511 585 513 595 516C606 519 614 524 620 530C624 540 625.500 555 625 570C624.500 590 623 605 621 620C618 640 615 650 612.500 657.500C608 675 602 686 595 692.500C591 697 587 700 582.500 700C575 700.500 568 700 560 698.800C549 697 538 694 530 690C525 684 522 676 520 665C517.500 650 517 635 517.500 620C518 603 521 585 525 570C530 550 538 532 545 520C549 515 553 513 557.500 512.500z" fill="#000"/>
<g transform="translate(598 613.5) rotate(9.5) scale(0.3 1)"><circle r="70.5" fill="#c8c8c8" stroke="#9a9a9a" stroke-width="1.500"/><path d="M17.10 4.26L65.01 -5.12A65.2 65.2 0 0 1 55.00 35.04z" fill="#000"/><path d="M4.86 16.94L36.94 53.74A65.2 65.2 0 0 1 -2.84 65.15z" fill="#000"/><path d="M-12.24 12.68L-28.07 58.86A65.2 65.2 0 0 1 -57.84 30.11z" fill="#000"/><path d="M-17.10 -4.26L-65.01 5.12A65.2 65.2 0 0 1 -55.00 -35.04z" fill="#000"/><path d="M-4.86 -16.94L-36.94 -53.74A65.2 65.2 0 0 1 2.84 -65.15z" fill="#000"/><path d="M12.24 -12.68L28.07 -58.86A65.2 65.2 0 0 1 57.84 -30.11z" fill="#000"/></g><circle cx="598" cy="613.5" r="6" fill="#7d7d7d" stroke="#2a2a2a" stroke-width="1"/><circle cx="598" cy="613.5" r="2.5" fill="#111"/>
<path d="M825 406C837 405 850 406.500 860 408.800C867 412 872 425 875 445C876 462 873 480 868 495C863 507 856 515 845 517.500C833 516 820 511 810 505C805 495 802.500 480 803.800 460C805 440 812 420 819 410C821 408 823 406.500 825 406z" fill="#000"/>
<g transform="translate(855.2 464.4) rotate(9.3) scale(0.34 1)"><circle r="45.6" fill="#c8c8c8" stroke="#9a9a9a" stroke-width="1.500"/><path d="M11.06 2.76L42.05 -3.31A42.2 42.2 0 0 1 35.57 22.66z" fill="#000"/><path d="M3.14 10.96L23.89 34.76A42.2 42.2 0 0 1 -1.84 42.14z" fill="#000"/><path d="M-7.92 8.20L-18.16 38.07A42.2 42.2 0 0 1 -37.41 19.48z" fill="#000"/><path d="M-11.06 -2.76L-42.05 3.31A42.2 42.2 0 0 1 -35.57 -22.66z" fill="#000"/><path d="M-3.14 -10.96L-23.89 -34.76A42.2 42.2 0 0 1 1.84 -42.14z" fill="#000"/><path d="M7.92 -8.20L18.16 -38.07A42.2 42.2 0 0 1 37.41 -19.48z" fill="#000"/></g><circle cx="855.2" cy="464.4" r="3.6" fill="#7d7d7d" stroke="#2a2a2a" stroke-width="1"/><circle cx="855.2" cy="464.4" r="1.5" fill="#111"/>
</svg>
</div>
<div id="vscroll"><div class="abs" style="left:2px;top:141px;width:8px;height:272px;border-radius:4px;background:#c2c2c2"></div></div>
<div id="hscroll">
 <div class="abs" style="left:78px;top:3px;width:838px;height:7px;border-radius:4px;background:#c2c2c2"></div>
 <div class="abs" style="left:0;top:-2px;width:47px;height:15px;background:#fff;border-top:1px solid #b4b4b4;border-left:1px solid #777;font-size:10.500px;line-height:13px;color:#222;padding-left:3px">125%</div>
<svg class="abs" style="left:46px;top:-1px" width="18" height="14" viewBox="0 0 18 14"><defs><linearGradient id="gblue2" x1="0" y1="0" x2="0" y2="1"><stop offset="0" stop-color="#4f9ff7"/><stop offset="1" stop-color="#2272ee"/></linearGradient></defs><path d="M0 0h17v14h-17z" fill="url(#gblue2)"/><path d="M5.500 4.800l3-2.900 3 2.900M5.500 8.200l3 2.900 3-2.900" fill="none" stroke="#fff" stroke-width="1.500"/></svg>
</div>
<div id="side">
<div class="abs" style="left:0px;top:26px;width:258px;height:1px;background:#9f9f9f"></div>
<svg class="abs" style="left:0;top:0" width="258" height="651" viewBox="1013 108 258 651">
<defs>
<linearGradient id="gvis" x1="0" y1="0" x2="0" y2="1"><stop offset="0" stop-color="#e8e8e8"/><stop offset="1" stop-color="#c4c4c4"/></linearGradient>
<linearGradient id="ggrn" x1="0" y1="0" x2="1" y2="0"><stop offset="0" stop-color="#2fae1e"/><stop offset=".5" stop-color="#6fe04a"/><stop offset="1" stop-color="#2fae1e"/></linearGradient>
<linearGradient id="ggry" x1="0" y1="0" x2="1" y2="0"><stop offset="0" stop-color="#5a5a5a"/><stop offset=".5" stop-color="#9a9a9a"/><stop offset="1" stop-color="#5a5a5a"/></linearGradient>
<linearGradient id="ggold" x1="0" y1="0" x2="0" y2="1"><stop offset="0" stop-color="#e9c25a"/><stop offset="1" stop-color="#b98a1e"/></linearGradient>
<linearGradient id="gsilv" x1="0" y1="0" x2="0" y2="1"><stop offset="0" stop-color="#dcdcdc"/><stop offset="1" stop-color="#b9b9b9"/></linearGradient>
<g id="visG"><rect x="0" y="0" width="13.500" height="19.500" rx="2" fill="url(#gvis)" stroke="#b5b5b5" stroke-width=".8"/><rect x="4.300" y="2.800" width="5" height="13.500" rx="1.500" fill="url(#ggrn)" stroke="#2a7a1a" stroke-width=".9"/></g>
<g id="visO"><rect x="0" y="0" width="13.500" height="19.500" rx="2" fill="url(#gvis)" stroke="#b5b5b5" stroke-width=".8"/><rect x="4.300" y="2.800" width="5" height="13.500" rx="1.500" fill="url(#ggry)" stroke="#444" stroke-width=".9"/></g>
<g id="lockS"><path d="M3 5.500V3.800a3 3 0 0 1 6 0V5.500" fill="none" stroke="#c4c4c4" stroke-width="1.500"/><rect x="0.500" y="5.500" width="11" height="7" rx=".8" fill="url(#gsilv)"/></g>
<g id="lockG"><path d="M3 5.500V3.800a3 3 0 0 1 6 0V5.500" fill="none" stroke="#b9b9b9" stroke-width="1.500"/><rect x="0.500" y="5.500" width="11" height="7" rx=".8" fill="url(#ggold)"/></g>
<g id="lockD"><path d="M3 5.500V3.800a3 3 0 0 1 6 0V5.500" fill="none" stroke="#a4a4a4" stroke-width="1.500"/><rect x="0.500" y="5.500" width="11" height="7" rx=".8" fill="#a0a0a0"/></g>
</defs>
<rect x="1017.5" y="111.500" width="19.500" height="19" fill="#b9b9b9" stroke="#a3a3a3"/>
<path d="M1023.500 114v14M1030.500 114v14M1020 117.500h14.500M1020 124.500h14.500" stroke="#666" stroke-width="1.100" fill="none"/>
<path d="M1047.500 113.500v14.500M1044.500 116.500h15.500" stroke="#555" stroke-width="1.100" fill="none"/><rect x="1049.500" y="118.500" width="8" height="8" fill="#f4f4f4" stroke="#777" stroke-width="1"/>
<rect x="1250.500" y="114.500" width="13" height="13" fill="#fdfdfd" stroke="#9b9b9b"/><rect x="1259" y="115" width="4" height="12" fill="#6b6b6b"/>
<rect x="1016.500" y="138.500" width="27.500" height="27.500" rx="4" fill="#808080" stroke="#6e6e6e" stroke-width=".8"/>
<path d="M1041.05 152.18L1041.05 154.02L1039.00 154.27L1038.80 155.17L1040.54 156.29L1039.74 157.94L1037.78 157.28L1037.21 158.00L1038.29 159.76L1036.85 160.91L1035.37 159.47L1034.55 159.86L1034.75 161.92L1032.97 162.33L1032.26 160.39L1031.34 160.39L1030.63 162.33L1028.85 161.92L1029.05 159.86L1028.23 159.47L1026.75 160.91L1025.31 159.76L1026.39 158.00L1025.82 157.28L1023.86 157.94L1023.06 156.29L1024.80 155.17L1024.60 154.27L1022.55 154.02L1022.55 152.18L1024.60 151.93L1024.80 151.03L1023.06 149.91L1023.86 148.26L1025.82 148.92L1026.39 148.20L1025.31 146.44L1026.75 145.29L1028.23 146.73L1029.05 146.34L1028.85 144.28L1030.63 143.87L1031.34 145.81L1032.26 145.81L1032.97 143.87L1034.75 144.28L1034.55 146.34L1035.37 146.73L1036.85 145.29L1038.29 146.44L1037.21 148.20L1037.78 148.92L1039.74 148.26L1040.54 149.91L1038.80 151.03L1039.00 151.93z" fill="#555" />
<defs><linearGradient id="ggear" x1="0" y1="0" x2="1" y2="1"><stop offset="0" stop-color="#e0e0e0"/><stop offset=".6" stop-color="#c4c4c4"/><stop offset="1" stop-color="#a8a8a8"/></linearGradient></defs>
<path d="M1039.95 151.28L1039.95 153.12L1037.90 153.37L1037.70 154.27L1039.44 155.39L1038.64 157.04L1036.68 156.38L1036.11 157.10L1037.19 158.86L1035.75 160.01L1034.27 158.57L1033.45 158.96L1033.65 161.02L1031.87 161.43L1031.16 159.49L1030.24 159.49L1029.53 161.43L1027.75 161.02L1027.95 158.96L1027.13 158.57L1025.65 160.01L1024.21 158.86L1025.29 157.10L1024.72 156.38L1022.76 157.04L1021.96 155.39L1023.70 154.27L1023.50 153.37L1021.45 153.12L1021.45 151.28L1023.50 151.03L1023.70 150.13L1021.96 149.01L1022.76 147.36L1024.72 148.02L1025.29 147.30L1024.21 145.54L1025.65 144.39L1027.13 145.83L1027.95 145.44L1027.75 143.38L1029.53 142.97L1030.24 144.91L1031.16 144.91L1031.87 142.97L1033.65 143.38L1033.45 145.44L1034.27 145.83L1035.75 144.39L1037.19 145.54L1036.11 147.30L1036.68 148.02L1038.64 147.36L1039.44 149.01L1037.70 150.13L1037.90 151.03z" fill="url(#ggear)" />
<circle cx="1030.1000000000001" cy="152.2" r="4.300" fill="#d8d8d8" stroke="#a0a0a0" stroke-width=".8"/><circle cx="1030.4" cy="152.29999999999998" r="2.600" fill="#6f6f6f"/><circle cx="1031.1000000000001" cy="152.5" r="2" fill="#8a8a8a"/>
<path d="M1052.200 143.500h20" stroke="#444" stroke-width="2.300"/><path d="M1052.200 147.700h20" stroke="#444" stroke-width="2" stroke-dasharray="3 1.500"/><path d="M1052.200 151.600h20" stroke="#666" stroke-width="1.100" stroke-dasharray="1 1.600"/><path d="M1052.200 155.200h20" stroke="#444" stroke-width="1.500"/><path d="M1052.200 158.600h20" stroke="#8a8a8a" stroke-width="1.300"/><path d="M1052.200 162.300h20" stroke="#b4b4b4" stroke-width="1.200"/>
<rect x="1084.5" y="142.5" width="5.2" height="5.2" fill="#b0473d" stroke="#6a6a6a" stroke-width=".6"/><rect x="1091.5" y="142.5" width="5.2" height="5.2" fill="#a87a52" stroke="#6a6a6a" stroke-width=".6"/><rect x="1099.5" y="143.5" width="3.2" height="3.2" fill="#e4df45" stroke="#555" stroke-width=".6"/><rect x="1084.5" y="149.5" width="5.2" height="5.2" fill="#3d7a3d" stroke="#6a6a6a" stroke-width=".6"/><rect x="1091.5" y="149.5" width="5.2" height="5.2" fill="#6e9d52" stroke="#6a6a6a" stroke-width=".6"/><rect x="1099.5" y="150.5" width="3.2" height="3.2" fill="#44445a" stroke="#555" stroke-width=".6"/><rect x="1084.5" y="156.5" width="5.2" height="5.2" fill="#34447a" stroke="#6a6a6a" stroke-width=".6"/><rect x="1091.5" y="156.5" width="5.2" height="5.2" fill="#4a86b5" stroke="#6a6a6a" stroke-width=".6"/><rect x="1099.5" y="157.5" width="3.2" height="3.2" fill="#55557a" stroke="#555" stroke-width=".6"/>
<rect x="1116.0" y="142.5" width="5.2" height="5.2" fill="#e8301c"/><rect x="1123.0" y="142.5" width="5.2" height="5.2" fill="#f5923e"/><rect x="1130.0" y="142.5" width="5.2" height="5.2" fill="#fdf733"/><rect x="1116.0" y="149.5" width="5.2" height="5.2" fill="#1f8d1f"/><rect x="1123.0" y="149.5" width="5.2" height="5.2" fill="#7bc74a"/><rect x="1130.0" y="149.5" width="5.2" height="5.2" fill="#d2efce"/><rect x="1116.0" y="156.5" width="5.2" height="5.2" fill="#0a3d91"/><rect x="1123.0" y="156.5" width="5.2" height="5.2" fill="#2b96ea"/><rect x="1130.0" y="156.5" width="5.2" height="5.2" fill="#cfcdf6"/>
<path d="M1159.500 143.800h8.500M1159.500 147.300h8.500M1159.500 150.800h8.500M1148 154.500h20M1148 158.200h20M1148 161.800h20" stroke="#9a9a9a" stroke-width="1.800"/>
<text x="1147.300" y="152.500" font-size="14.500" font-weight="bold" fill="#8a8a8a" stroke="#8a8a8a" stroke-width=".7" font-family="Liberation Sans, sans-serif">A</text>
<g stroke="#666" stroke-width="1.100" fill="none"><path d="M1180.500 160.500l6.500-5.500M1193 149l6.500-5.500"/><path d="M1178.300 158l3.800 5M1197.600 141.300l3.800 5" stroke-width=".8"/></g><path d="M1180.700 160.300l2.200-6.600 4.300 4.900zM1199.300 143.700l-2.200 6.600-4.300-4.900z" fill="#666"/>
<text transform="translate(1190.800 154) rotate(-41)" font-size="4.600" font-weight="bold" text-anchor="middle" fill="#444" font-family="Liberation Sans, sans-serif">99.9</text>
<rect x="1212.500" y="142.500" width="18" height="18" rx="1" fill="#fff" stroke="#a9a9a9" filter="url(#sh)"/><path d="M1217 143v17M1221.500 143v17M1226 143v17M1213 147h17M1213 151.500h17M1213 156h17" stroke="#eee" stroke-width=".7"/>
<rect x="1244.500" y="143" width="18.500" height="18" fill="#fdfdfd" stroke="#9a9a9a" filter="url(#sh)"/><rect x="1247.500" y="146" width="12.500" height="9.500" fill="#8d8d8d" stroke="#666" stroke-width=".8"/><path d="M1248.500 154.500l3.500-4 2.500 2.500 2-1.800 2.500 3.300z" fill="#d0d0d0"/><circle cx="1256.500" cy="148.700" r="1" fill="#d8d8d8"/>
</svg>
<div class="box" style="left:3px;top:62.5px;width:252px;height:299px;"></div>
<div class="sl lg" style="left:10px;top:70px;font-size:12px;color:#1d1d1d;letter-spacing:0.25px;">Properties</div>
<div class="abs" style="left:9px;top:92px;width:238px;height:1px;background:#bdbdbd"></div>
<div class="sl lg" style="left:13px;top:96px;font-size:11px;color:#1d1d1d;letter-spacing:0.25px;">Location</div>
<div class="sl lg" style="left:137px;top:96px;font-size:11px;color:#1d1d1d;letter-spacing:0.25px;">Size</div>
<div class="sl lg" style="left:13px;top:121px;font-size:11px;color:#1d1d1d;letter-spacing:0px;">X</div>
<div class="fld" style="left:28px;top:117px;width:90px;height:20px;"></div>
<div class="sl lg" style="left:137px;top:121px;font-size:11px;color:#1d1d1d;letter-spacing:0px;">W</div>
<div class="fld" style="left:153px;top:117px;width:90px;height:20px;"></div>
<div class="sl lg" style="left:13px;top:146px;font-size:11px;color:#1d1d1d;letter-spacing:0px;">Y</div>
<div class="fld" style="left:28px;top:142px;width:90px;height:20px;"></div>
<div class="sl lg" style="left:137px;top:146px;font-size:11px;color:#1d1d1d;letter-spacing:0px;">H</div>
<div class="fld" style="left:153px;top:142px;width:90px;height:20px;"></div>
<div class="abs" style="left:9px;top:167px;width:238px;height:1px;background:#bdbdbd"></div>
<div class="sl lg" style="left:13px;top:176px;font-size:11px;color:#1d1d1d;letter-spacing:0.3px;">Rotation</div>
<div class="fld" style="left:153px;top:172px;width:62px;height:19px;"></div>
<div class="abs lg" style="left:29px;top:196px;width:186px;height:21px;background:#fff;border:1px solid #c4c4c4;border-bottom-color:#b0b0b0;border-radius:4px;text-align:center;font-size:11px;line-height:19px;color:#222;letter-spacing:.35px">Reset Bounding Box</div>
<div class="abs" style="left:9px;top:224px;width:238px;height:1px;background:#bdbdbd"></div>
<div class="sl lg" style="left:13px;top:233px;font-size:11px;color:#1d1d1d;letter-spacing:0.3px;">Length</div>
<div class="fld" style="left:73px;top:229px;width:82px;height:19px;"></div>
<div class="sl lg" style="left:176px;top:233px;font-size:11px;color:#1d1d1d;letter-spacing:0.2px;">Center</div>
<div class="sl lg" style="left:13px;top:258px;font-size:11px;color:#1d1d1d;letter-spacing:0.2px;">Angle</div>
<div class="fld" style="left:73px;top:254px;width:50px;height:19px;"></div>
<div class="sl lg" style="left:140px;top:258px;font-size:11px;color:#1d1d1d;letter-spacing:0px;">X</div>
<div class="fld" style="left:153px;top:254px;width:90px;height:19px;"></div>
<div class="sl lg" style="left:13px;top:283px;font-size:11px;color:#1d1d1d;letter-spacing:0.2px;">Radius</div>
<div class="fld" style="left:73px;top:279px;width:50px;height:19px;"></div>
<div class="sl lg" style="left:140px;top:283px;font-size:11px;color:#1d1d1d;letter-spacing:0px;">Y</div>
<div class="fld" style="left:153px;top:279px;width:90px;height:19px;"></div>
<div class="abs" style="left:9px;top:306px;width:238px;height:1px;background:#bdbdbd"></div>
<div class="abs" style="left:21px;top:317px;width:13px;height:13px;background:#ececec;border:1px solid #c8c8c8;border-radius:3px"></div>
<div class="sl lg" style="left:39px;top:317px;font-size:11px;color:#b3b3b3;letter-spacing:0.3px;">1:1 Aspect Ratio</div>
<div class="abs" style="left:21px;top:337px;width:13px;height:13px;background:#ececec;border:1px solid #c8c8c8;border-radius:3px"></div>
<div class="sl lg" style="left:39px;top:337px;font-size:11px;color:#b3b3b3;letter-spacing:0.25px;">Edit Points</div>
<div class="box" style="left:3px;top:366.5px;width:252px;height:187.5px;border-bottom:none;border-radius:5px 5px 0 0"></div>
<div class="abs" style="left:3px;top:553px;width:252px;height:60px;background:#e5e5e5"></div>
<div class="abs" style="left:3px;top:613px;width:252px;height:35px;background:#e5e5e5;border:1px solid #b2b2b2;border-top:none;border-radius:0 0 6px 6px"></div>
<div class="sl lg" style="left:10px;top:376px;font-size:12px;color:#1d1d1d;letter-spacing:0.3px;">Layers</div>
<div class="abs" style="left:4px;top:399px;width:250px;height:30px;background:#909090;border-top:1px solid #858585"></div>
<div class="sl lg" style="left:10px;top:406px;font-size:12px;color:#fff;letter-spacing:0.3px;">Accessories</div>
<div class="abs" style="left:4px;top:429.5px;width:250px;height:30px;background:#fff;border-top:1px solid #c6c6c6"></div>
<div class="sl lg" style="left:10px;top:436.5px;font-size:12px;color:#111;letter-spacing:0.3px;">Lights</div>
<div class="abs" style="left:4px;top:460.5px;width:250px;height:30px;background:#fff;border-top:1px solid #c6c6c6"></div>
<div class="sl lg" style="left:10px;top:467.5px;font-size:12px;color:#111;letter-spacing:0.3px;">Body</div>
<div class="abs" style="left:4px;top:491.5px;width:250px;height:30px;background:#fff;border-top:1px solid #c6c6c6"></div>
<div class="sl lg" style="left:10px;top:498.5px;font-size:12px;color:#111;letter-spacing:0.3px;">Wheels</div>
<div class="abs" style="left:4px;top:522.5px;width:250px;height:30px;background:#fff;border-top:1px solid #c6c6c6"></div>
<div class="sl lg" style="left:10px;top:529.5px;font-size:12px;color:#111;letter-spacing:0.3px;">Wireframe</div>
<div class="abs" style="left:4px;top:552.5px;width:250px;height:1px;background:#bcbcbc"></div>
<svg class="abs" style="left:0;top:0" width="258" height="651" viewBox="1013 108 258 651">
<rect x="1211" y="488" width="10" height="10.800" rx="1" fill="#595959"/><rect x="1211" y="486.500" width="10" height="1.500" fill="#9c9c9c"/><rect x="1209.300" y="485" width="13.200" height="1.600" rx=".5" fill="#666"/><path d="M1213.500 485v-1.200a.8.800 0 0 1 .8-.8h3.400a.8.800 0 0 1 .8.800v1.200" fill="#8a8a8a" stroke="#666" stroke-width=".8"/><path d="M1213.200 489.300v7.700M1216 489.300v7.700M1218.700 489.300v7.700" stroke="#e0e0e0" stroke-width="1.200"/>
<path d="M1238.800 491h14.500M1246 483.500v14.500" stroke="#555" stroke-width="1.900"/>
<use href="#visG" x="1209" y="511.5"/>
<use href="#lockD" x="1240" y="514.5"/>
<use href="#visG" x="1209" y="542.0"/>
<use href="#lockS" x="1240" y="545.0"/>
<use href="#visO" x="1209" y="573.0"/>
<use href="#lockG" x="1240" y="576.0"/>
<use href="#visG" x="1209" y="604.0"/>
<use href="#lockG" x="1240" y="607.0"/>
<use href="#visG" x="1209" y="635.0"/>
<use href="#lockS" x="1240" y="638.0"/>
<rect x="1023.500" y="730" width="9" height="12" fill="#b4b4b4" stroke="#808080"/><rect x="1026.500" y="732.500" width="10" height="13" fill="#fff" stroke="#8a8a8a" filter="url(#sh)"/>
<rect x="1047.500" y="730" width="14" height="6" fill="#999" stroke="#777" stroke-width=".8"/><path d="M1047.500 740v6.500h14V740" fill="#fff" stroke="#777" stroke-width=".9"/><path d="M1053 734h3v4h2.300l-3.800 4-3.800-4h2.300z" fill="#fff" stroke="#555" stroke-width=".8"/>
<path d="M1071 738.300h137" stroke="#4a90e2" stroke-width="3" stroke-linecap="round"/><circle cx="1212.500" cy="738.300" r="7.700" fill="#fff" stroke="#c9c9c9" stroke-width=".8" filter="url(#sh)"/>
</svg>
<div class="fld lg" style="left:214px;top:620.5px;width:35px;height:19px;font-size:11px;line-height:17px;color:#111;padding-left:4.500px;letter-spacing:.2px">100</div>
</div>
<div id="bbar">
<svg class="abs" style="left:0;top:0" width="1261" height="30" viewBox="10 760 1261 30">
<defs>
<g id="hw"><circle r="1.500" fill="#fff" stroke="#444" stroke-width=".8"/></g>
<g id="hb"><rect x="-1.450" y="-1.450" width="2.900" height="2.900" rx=".6" fill="#2e62b8" stroke="#14306e" stroke-width=".8"/></g>
<g id="hbc"><circle r="1.700" fill="#2e62b8" stroke="#14306e" stroke-width=".8"/></g>
<g id="hr"><rect x="-1.550" y="-1.550" width="3.100" height="3.100" rx=".5" fill="#d42a2a" stroke="#7a1010" stroke-width=".8"/></g>
<g id="hrc"><circle r="1.700" fill="#d42a2a" stroke="#7a1010" stroke-width=".8"/></g>
<g id="hl"><rect x="-2" y="-2" width="4" height="4" rx=".5" fill="#8cc8f5" stroke="#1d4e8a" stroke-width=".8"/></g>
<g id="hs"><rect x="-1.300" y="-1.300" width="2.600" height="2.600" fill="#fff" stroke="#444" stroke-width=".7"/></g>
<path id="arU" d="M0 -3.500l3.200 3.500h-1.700v3.200h-3v-3.200h-1.700z" fill="#fff" stroke="#333" stroke-width=".8"/>
<path id="arD" d="M0 3.500l3.200 -3.500h-1.700v-3.200h-3v3.200h-1.700z" fill="#fff" stroke="#333" stroke-width=".8"/>
</defs>
<path d="M136.700 768H153.500" stroke="#555" stroke-width="1" fill="none"/><path d="M136.7 777.5C136.7 772 140.6 768 145.1 768C149.6 768 153.5 772 153.5 777.5" stroke="#555" stroke-width="1" fill="none"/><path d="M136.700 783.200H153.500" stroke="#555" stroke-width="1" fill="none"/>
<use href="#hw" x="136.7" y="768"/><use href="#hbc" x="145.2" y="768"/><use href="#hw" x="153.5" y="768"/><use href="#hb" x="136.7" y="777.5"/><use href="#hb" x="153.5" y="777.5"/><use href="#arU" x="145.2" y="776.8"/><use href="#hs" x="136.7" y="783.2"/><use href="#hs" x="145.2" y="783.2"/><use href="#hs" x="153.5" y="783.2"/>
<path d="M172.400 768H188.400M172.400 782.300H188.400" stroke="#555" stroke-width="1" fill="none"/><path d="M172.4 782.3C172.4 772 175.9 768 180.4 768C184.9 768 188.4 772 188.4 782.3" stroke="#555" stroke-width="1" fill="none"/>
<use href="#hw" x="172.4" y="768"/><use href="#hbc" x="180.5" y="768"/><use href="#hw" x="188.4" y="768"/><use href="#hb" x="172.4" y="782.3"/><use href="#hb" x="188.4" y="782.3"/>
<path d="M207.300 768H223.600M207.300 782.300H223.600" stroke="#555" stroke-width="1" fill="none"/><path d="M207.3 782.3C207.3 772 210.95 768 215.45 768C219.95 768 223.6 772 223.6 782.3" stroke="#555" stroke-width="1" fill="none"/>
<use href="#hw" x="207.3" y="768"/><use href="#hbc" x="215.6" y="768"/><use href="#hw" x="223.6" y="768"/><use href="#hr" x="207.3" y="782.3"/><use href="#hr" x="223.6" y="782.3"/>
<path d="M213.600 780.300l4 4M217.600 780.300l-4 4" stroke="#e02020" stroke-width="1.100"/>
<path d="M246 770.600h9.200M250.600 766v9.200" stroke="#666" stroke-width="1.500"/>
<path d="M241.700 781.300H258.400" stroke="#555" stroke-width="1" fill="none"/><use href="#hr" x="241.9" y="781.3"/><use href="#hl" x="250.3" y="781.3"/><use href="#hr" x="258.2" y="781.3"/>
<path d="M281 770.600h8" stroke="#888" stroke-width="1.800"/>
<path d="M276 781.300H294" stroke="#555" stroke-width="1" fill="none"/><use href="#hr" x="285" y="781.3"/>
<path d="M311 767.700H328.800M311 782H328.800" stroke="#555" stroke-width="1" fill="none"/><use href="#hr" x="319.9" y="767.7"/><use href="#arD" x="319.9" y="775"/><use href="#hl" x="316.8" y="782"/><use href="#hl" x="323.5" y="782"/>
<path d="M346 767.700H364.400M346 782H364.400" stroke="#555" stroke-width="1" fill="none"/><use href="#hl" x="351.8" y="767.7"/><use href="#hr" x="358.9" y="767.7"/><use href="#arD" x="355.3" y="775"/><use href="#hl" x="355.3" y="782"/>
<path d="M387.200 767.200H397.500" stroke="#555" stroke-width="1" fill="none"/><path d="M382 782.300C387 780 388 772 387.200 767.200C394 769 398.500 776 399 782.300" stroke="#555" stroke-width="1" fill="none"/>
<use href="#hrc" x="387.2" y="767.2"/><use href="#hw" x="397.5" y="767.2"/><use href="#hw" x="390.2" y="775.3"/><use href="#hb" x="382" y="782.3"/><use href="#hb" x="399" y="782.3"/>
<path d="M419 767.200H434.300" stroke="#555" stroke-width="1" fill="none"/><path d="M416.5 782.3C416.5 771.2 420.5 767.2 425.0 767.2C429.5 767.2 433.5 771.2 433.5 782.3" stroke="#555" stroke-width="1" fill="none"/>
<use href="#hw" x="419" y="767.2"/><use href="#hrc" x="425.5" y="767.2"/><use href="#hw" x="434.3" y="767.2"/><use href="#hb" x="416.5" y="782.3"/><use href="#hb" x="433.5" y="782.3"/>
<path d="M452 767.200H468.400" stroke="#555" stroke-width="1" fill="none"/><path d="M451.7 782.3C451.7 771.2 455.54999999999995 767.2 460.04999999999995 767.2C464.54999999999995 767.2 468.4 771.2 468.4 782.3" stroke="#555" stroke-width="1" fill="none"/>
<use href="#hw" x="452" y="767.2"/><use href="#hrc" x="460.4" y="767.2"/><use href="#hw" x="468.4" y="767.2"/><use href="#hb" x="451.7" y="782.3"/><use href="#hb" x="468.4" y="782.3"/>
<path d="M486.8 774.6C486.8 771.5 490.70000000000005 767.5 495.20000000000005 767.5C499.70000000000005 767.5 503.6 771.5 503.6 774.6" stroke="#555" stroke-width="1" fill="none"/><path d="M486.800 782.300H503.600" stroke="#555" stroke-width="1" fill="none"/>
<use href="#hw" x="486.8" y="767.5"/><use href="#hw" x="503.6" y="767.5"/><use href="#hrc" x="486.8" y="774.6"/><use href="#hrc" x="503.6" y="774.6"/><use href="#arD" x="495.3" y="775.8"/><use href="#hb" x="486.8" y="782.3"/><use href="#hb" x="503.6" y="782.3"/>
<path d="M522.200 767.500H538.500" stroke="#555" stroke-width="1" fill="none"/><path d="M522.200 775C522.200 780 526 782.500 530.300 782.500C535 782.500 538.500 780 538.500 775" stroke="#555" stroke-width="1" fill="none"/>
<use href="#hr" x="522.2" y="767.5"/><use href="#hr" x="538.5" y="767.5"/><use href="#hb" x="522.2" y="775"/><use href="#hb" x="538.5" y="775"/><use href="#arD" x="530.3" y="775.3"/><use href="#hw" x="522.2" y="782.6"/><use href="#hw" x="538.5" y="782.6"/>
</svg>
</div>
</div>
</body></html>
